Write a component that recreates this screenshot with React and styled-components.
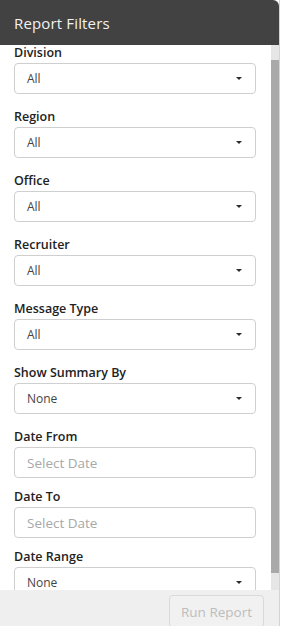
import React from "react";
import styled, { createGlobalStyle } from "styled-components";

const Global = createGlobalStyle`
  html, body { margin: 0; padding: 0; background: #ffffff; }
  body { font-family: "Open Sans", "Noto Sans", sans-serif; }
  * { box-sizing: border-box; }
`;

const Panel = styled.div`
  width: 280px;
  height: 626px;
  display: flex;
  flex-direction: column;
  border-right: 1px solid #d4d4d4;
  background: #ffffff;
  overflow: hidden;
`;

const Header = styled.div`
  height: 45px;
  flex: none;
  background: #424242;
  border-top-right-radius: 6px;
  color: #f2f2f2;
  font-size: 15px;
  font-weight: 500;
  display: flex;
  align-items: center;
  padding-left: 14px;
  letter-spacing: 0.15px;
`;

const Body = styled.div`
  flex: 1;
  min-height: 0;
  display: flex;
`;

const Viewport = styled.div`
  flex: 1;
  min-width: 0;
  overflow: hidden;
`;

const Track = styled.div`
  width: 8px;
  flex: none;
  background: #e6e6e6;
  padding-top: 15px;
`;

const Thumb = styled.div`
  height: 513px;
  background: #a9a9a9;
`;

const Content = styled.div`
  display: flex;
  flex-direction: column;
  padding: 0 14px;
`;

const Field = styled.div`
  display: flex;
  flex-direction: column;
  margin-bottom: ${(p) => (p.$compact ? "11px" : "15px")};
  &:last-child { margin-bottom: 0; }
`;

const Label = styled.label`
  font-size: 12.5px;
  font-weight: 600;
  color: #222222;
  line-height: 15px;
  margin-bottom: 3px;
`;

const Box = styled.div`
  height: 31px;
  width: 242px;
  border: 1px solid #cfcfcf;
  border-radius: 4px;
  display: flex;
  align-items: center;
  justify-content: space-between;
  padding: 0 12px;
  font-size: ${(p) => (p.$placeholder ? "13.5px" : "12px")};
  color: ${(p) => (p.$placeholder ? "#a8a8a8" : "#444444")};
  background: #ffffff;
`;

const Caret = styled.span`
  width: 0;
  height: 0;
  border-left: 3px solid transparent;
  border-right: 3px solid transparent;
  border-top: 3px solid #2a2a2a;
  margin-right: 1px;
`;

const Footer = styled.div`
  height: 36px;
  flex: none;
  background: #efefef;
  display: flex;
  justify-content: flex-end;
  align-items: flex-start;
  padding: 5px 15px 0 0;
`;

const Button = styled.button`
  width: 95px;
  height: 33px;
  border: 1px solid #d9d9d9;
  border-radius: 4px;
  background: #f1f1f1;
  color: #bdbdbd;
  font-family: inherit;
  font-size: 13.5px;
  font-weight: 500;
  padding: 0;
`;

const selects = [
  ["Division", "All"],
  ["Region", "All"],
  ["Office", "All"],
  ["Recruiter", "All"],
  ["Message Type", "All"],
  ["Show Summary By", "None"],
];

export default function App() {
  return (
    <>
      <Global />
      <Panel>
        <Header>Report Filters</Header>
        <Body>
          <Viewport>
            <Content>
              {selects.map(([l, v]) => (
                <Field key={l}>
                  <Label>{l}</Label>
                  <Box>
                    <span>{v}</span>
                    <Caret />
                  </Box>
                </Field>
              ))}
              <Field $compact>
                <Label>Date From</Label>
                <Box $placeholder>Select Date</Box>
              </Field>
              <Field $compact>
                <Label>Date To</Label>
                <Box $placeholder>Select Date</Box>
              </Field>
              <Field>
                <Label>Date Range</Label>
                <Box>
                  <span>None</span>
                  <Caret />
                </Box>
              </Field>
            </Content>
          </Viewport>
          <Track>
            <Thumb />
          </Track>
        </Body>
        <Footer>
          <Button disabled>Run Report</Button>
        </Footer>
      </Panel>
    </>
  );
}
